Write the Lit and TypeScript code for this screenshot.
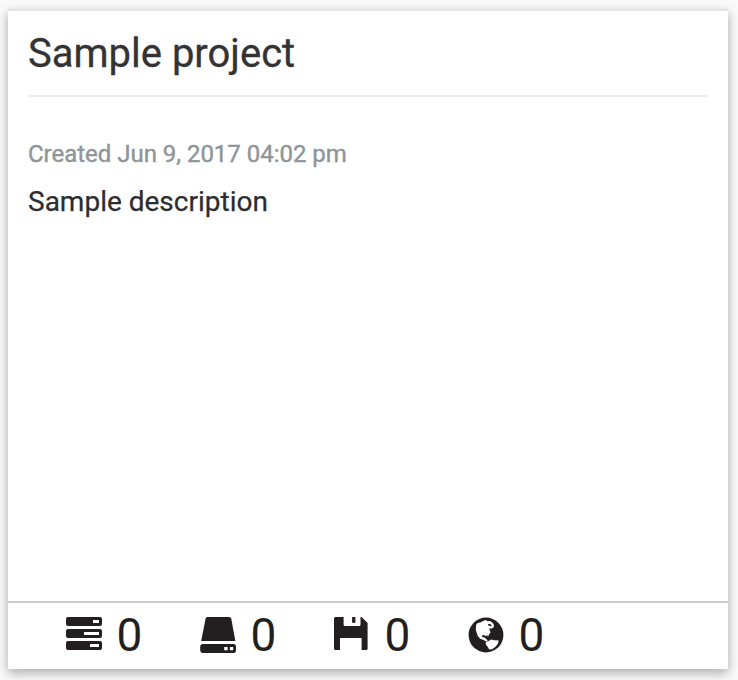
import { LitElement, html, svg, css } from "lit";
import { customElement, property } from "lit/decorators.js";

const servers = svg`
  <path fill-rule="evenodd" d="M2 0H34Q36 0 36 2V7Q36 9 34 9H2Q0 9 0 7V2Q0 0 2 0ZM27 3V6H33V3Z
    M2 12H34Q36 12 36 14V19Q36 21 34 21H2Q0 21 0 19V14Q0 12 2 12ZM18 15V18H33V15Z
    M2 24H34Q36 24 36 26V31Q36 33 34 33H2Q0 33 0 31V26Q0 24 2 24ZM24 27V30H33V27Z"/>`;

const drive = svg`
  <path d="M7.2 0H29.2Q30.8 0 31.2 1.5L35.4 24H1.2L5.6 1.5Q6 0 7.2 0Z"/>
  <path fill-rule="evenodd" d="M3 27H33.5Q36 27 36 30V33Q36 36 33.5 36H3Q0.2 36 0.2 33V30Q0.2 27 3 27ZM24.2 30V33.2H27.6V30ZM29.9 30V33.2H33.2V30Z"/>`;

const disk = svg`
  <path fill-rule="evenodd" d="M1.5 0H9.6V7.5Q9.6 9 11.1 9H25Q26.5 9 26.5 7.5V0H27.6L33.6 6V31.5Q33.6 33 32.1 33H27.6V21H6V33H1.5Q0 33 0 31.5V1.5Q0 0 1.5 0Z"/>
  <path d="M18.1 0H21.4V5.8H18.1Z"/>`;

const globe = svg`
  <circle cx="18" cy="18" r="17.4"/>
  <path class="land" d="M8 9.5L8.4 7L10.5 5.8L13 5.2L15 4L18 3L19.5 4.2L22 3.9L24.8 6L26 8.2L25.6 10.6L23.6 11.6L21.4 11.4L21.6 13L22.6 15.2L21 17.6L20 19.8L19.2 18.2L17.6 19L16 18L14 18.4L14.2 20L16.4 20.6L18.2 22L19.8 23.6L18 24.2L15 22.8L12.2 21.8L9.8 19L8.6 15.6L7.8 12.4Z"/>
  <path class="land" d="M17.8 24.8L20.6 24L23.2 22.4L26 23.2L29 23.2L30.8 23.8L29.8 27L27.2 30L24 32.2L21.2 32.6L19.8 30L17.8 27.6Z"/>
  <path d="M19.8 7.2L22 6.8L23.8 8.4L22.6 9.2L20.4 8.6Z"/>`;

@customElement("project-stat")
class ProjectStat extends LitElement {
  @property({ attribute: false }) icon: unknown;
  @property({ type: Number }) count = 0;

  static styles = css`
    :host {
      display: flex;
      width: 134px;
      height: 66px;
      color: #231f20;
    }
    .icon {
      width: 36px;
      height: 36px;
      margin-top: 14px;
      fill: currentColor;
      flex: none;
    }
    .land {
      fill: #fff;
    }
    .count {
      margin-left: 14.4px;
      font-size: 46px;
      line-height: 64px;
    }
  `;

  render() {
    return html`<svg class="icon" viewBox="0 0 36 36" aria-hidden="true">${this.icon}</svg>
      <span class="count">${this.count}</span>`;
  }
}

@customElement("app-root")
class AppRoot extends LitElement {
  static styles = css`
    :host {
      display: block;
      box-sizing: border-box;
      height: 680px;
      padding: 9px 10px 11px 8px;
      overflow: hidden;
      background: #fafafa;
      font-family: Roboto, "Liberation Sans", sans-serif;
    }
    .card {
      display: flex;
      flex-direction: column;
      box-sizing: border-box;
      height: 660px;
      background: #fff;
      border-top: 2px solid #e5e5e5;
      box-shadow: 0 4px 10px rgba(0, 0, 0, 0.26), 0 4px 12px rgba(0, 0, 0, 0.08);
    }
    .body {
      flex: 1;
      padding: 0 20px;
    }
    .title {
      box-sizing: border-box;
      margin: 0;
      height: 86px;
      padding-top: 1px;
      border-bottom: 2px solid #eee;
      font-size: 40px;
      font-weight: 400;
      line-height: 84px;
      color: #333;
      -webkit-text-stroke: 0.3px currentColor;
    }
    .created {
      margin: 39px 0 0;
      font-size: 24px;
      line-height: 36px;
      letter-spacing: -0.02px;
      color: #8e9598;
      -webkit-text-stroke: 0.4px currentColor;
    }
    .description {
      margin: 10px 0 0;
      font-size: 28px;
      line-height: 40px;
      color: #2d2d2f;
      -webkit-text-stroke: 0.25px currentColor;
    }
    .stats {
      display: flex;
      height: 66px;
      padding-left: 58px;
      border-top: 2px solid #ccc;
    }
  `;

  render() {
    return html`
      <article class="card">
        <div class="body">
          <h1 class="title">Sample project</h1>
          <p class="created">Created Jun 9, 2017 04:02 pm</p>
          <p class="description">Sample description</p>
        </div>
        <footer class="stats">
          ${[servers, drive, disk, globe].map(
            (icon) => html`<project-stat .icon=${icon} .count=${0}></project-stat>`
          )}
        </footer>
      </article>
    `;
  }
}
